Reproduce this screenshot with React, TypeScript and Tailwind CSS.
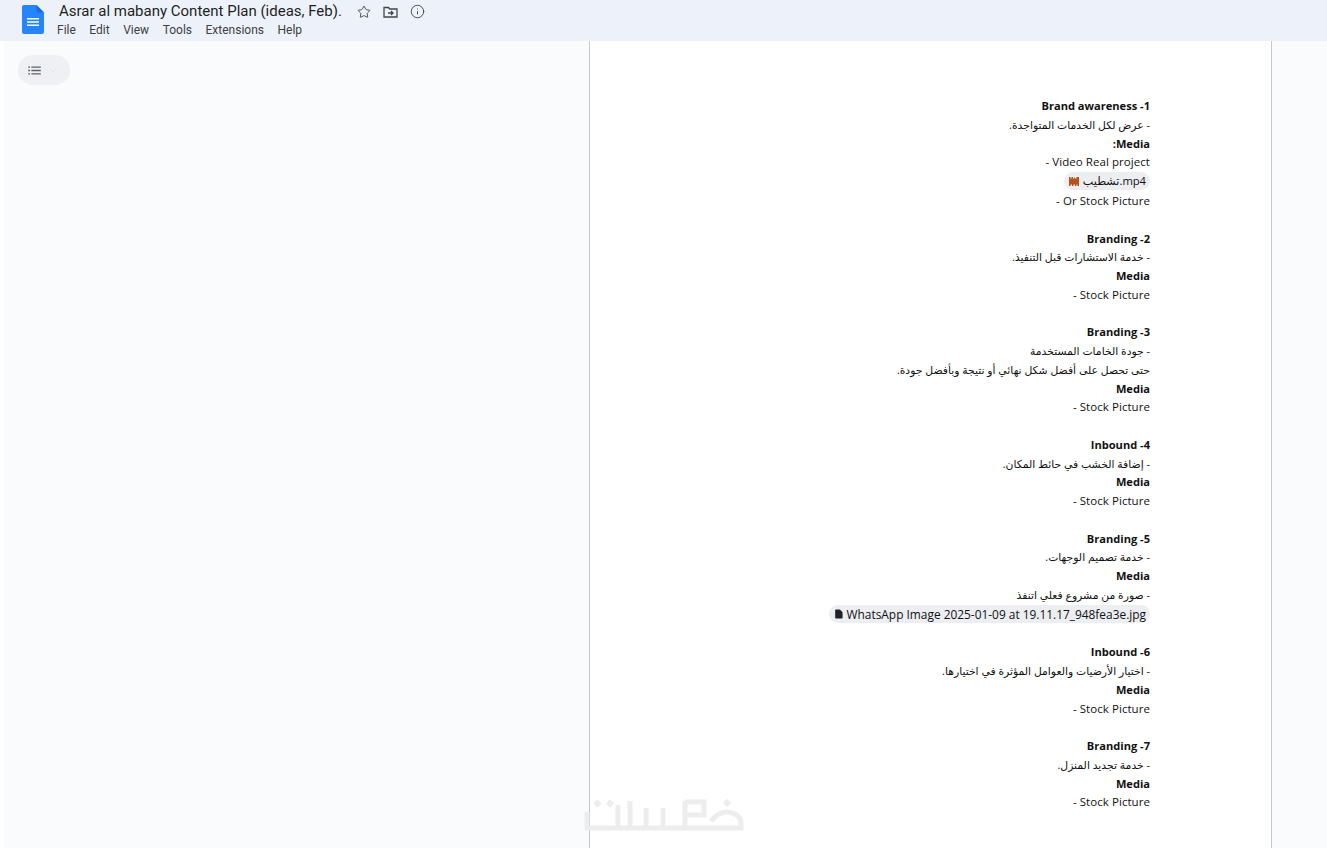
import React from "react";
import { Star, Info } from "lucide-react";

function Line({ children, kind = "latin" }: { children: React.ReactNode; kind?: "latin" | "bold" | "arabic" }) {
  const size =
    kind === "bold"
      ? "font-bold text-[11.100px] leading-[18.75px]"
      : kind === "arabic"
        ? "text-[10.800px] leading-[17.5px]"
        : "text-[11.500px] tracking-[0.06px] leading-[17.75px]";
  return <div className={"h-[18.75px] whitespace-nowrap " + size}>{children}</div>;
}
const Blank = () => <div className="h-[18.75px]" />;

function Chip({ icon, text, className }: { icon: React.ReactNode; text: string; className: string }) {
  return (
    <div className="h-5 flex justify-start items-start">
      <div dir="ltr" className={"h-[18px] flex items-center gap-[4px] rounded-[9px] bg-[#eceef1] pr-[4px] " + className}>
        {icon}
        <span className="leading-[18px] whitespace-nowrap">{text}</span>
      </div>
    </div>
  );
}

const Film = () => (
  <svg width="10" height="9" viewBox="0 0 10 9"><path d="M0 0h1.500v1.500h1V0h1.500v1.500h1.500V0H6v1.500h1.500V0H10v9H8.500V7.500h-1V9H6V7.500H4.500V9H3V7.500H1.500V9H0z" fill="#b3541e" /></svg>
);
const FileIc = () => (
  <svg width="8" height="10" viewBox="0 0 9 10"><path d="M1 0h4.500L8.500 3v6.200a.8.800 0 0 1-.8.800H1a.8.800 0 0 1-.8-.8V.8A.8.800 0 0 1 1 0z" fill="#202124" /></svg>
);

export default function App() {
  return (
    <div className="relative w-[1327px] h-[848px] overflow-hidden bg-white pl-[4px] font-['Open_Sans','DejaVu_Sans',sans-serif]">
      <header className="h-[41px] bg-[#edf2fa] -ml-[4px] pl-[4px] flex">
        <svg className="ml-[18px] mt-[5px]" width="22" height="29" viewBox="0 0 22 29">
          <path d="M2 0h12.500L22 7.500V27a2 2 0 0 1-2 2H2a2 2 0 0 1-2-2V2a2 2 0 0 1 2-2z" fill="#2684fc" />
          <path d="M14.500 0L22 7.500h-5.500a2 2 0 0 1-2-2z" fill="#1a6fe0" />
          <path d="M5 13h12v1.500H5zM5 16.200h12v1.500H5zM5 19.400h12v1.500H5z" fill="#fff" />
        </svg>
        <div className="ml-[15px] flex flex-col font-['Roboto',sans-serif]">
          <div className="flex items-center h-[21px] mt-[1px]">
            <span className="w-[282px] text-[15px] leading-[21px] text-[#1f1f1f] whitespace-nowrap">Asrar al mabany Content Plan (ideas, Feb).</span>
            <span className="ml-[16px] flex items-center gap-[12px] text-[#444746]">
              <Star size={14} strokeWidth={1.600} />
              <svg width="15" height="14" viewBox="0 0 15 14" fill="none" stroke="currentColor" strokeWidth="1.300">
                <path d="M1 2.500h4.500l1.300 1.500H14v8H1z" />
                <path d="M5 8h5M8 6l2 2-2 2" />
              </svg>
              <Info size={15} strokeWidth={1.500} />
            </span>
          </div>
          <nav className="-ml-[2px] flex gap-[13.500px] text-[12px] leading-[16px] text-[#3c4043]">
            <span>File</span><span>Edit</span><span>View</span><span>Tools</span><span>Extensions</span><span>Help</span>
          </nav>
        </div>
      </header>
      <main className="flex h-[807px] bg-[#f9fbfd]">
        <aside className="w-[585px] shrink-0 pl-[14px] pt-[14px]">
          <div className="w-[52px] h-[30px] rounded-[15px] bg-[#eef0f4] flex items-center pl-[10px] gap-[8px]">
            <svg width="13" height="9" viewBox="0 0 14 10" fill="#5f6368">
              <path d="M0 0.500h2v1.500H0zM3.500 0.500H14v1.500H3.500zM0 4.200h2v1.500H0zM3.500 4.200H14v1.500H3.500zM0 8h2v1.500H0zM3.500 8H14v1.500H3.500z" />
            </svg>
            <svg width="8" height="5" viewBox="0 0 8 5" fill="none" stroke="#e2e5ea" strokeWidth="1"><path d="M1 1l3 3 3-3" /></svg>
          </div>
        </aside>
        <section dir="rtl" className="w-[683px] shrink-0 bg-white border-x border-[#c7c7c7] pt-[56px] pr-[121px] text-[#111]">
          <Line kind="bold">1- Brand awareness</Line>
          <Line kind="arabic">- عرض لكل الخدمات المتواجدة.</Line>
          <Line kind="bold">Media:</Line>
          <Line>Video Real project -</Line>
          <Chip icon={<Film />} text="تشطيب.mp4" className="pl-[5px] text-[11.200px]" />
          <Line>Or Stock Picture -</Line>
          <Blank />
          <Line kind="bold">2- Branding</Line>
          <Line kind="arabic">- خدمة الاستشارات قبل التنفيذ.</Line>
          <Line kind="bold">Media</Line>
          <Line>Stock Picture -</Line>
          <Blank />
          <Line kind="bold">3- Branding</Line>
          <Line kind="arabic">- جودة الخامات المستخدمة</Line>
          <Line kind="arabic">حتى تحصل على أفضل شكل نهائي أو نتيجة وبأفضل جودة.</Line>
          <Line kind="bold">Media</Line>
          <Line>Stock Picture -</Line>
          <Blank />
          <Line kind="bold">4- Inbound</Line>
          <Line kind="arabic">- إضافة الخشب في حائط المكان.</Line>
          <Line kind="bold">Media</Line>
          <Line>Stock Picture -</Line>
          <Blank />
          <Line kind="bold">5- Branding</Line>
          <Line kind="arabic">- خدمة تصميم الوجهات.</Line>
          <Line kind="bold">Media</Line>
          <Line kind="arabic">- صورة من مشروع فعلي اتنفذ</Line>
          <Chip icon={<FileIc />} text="WhatsApp Image 2025-01-09 at 19.11.17_948fea3e.jpg" className="pl-[6px] text-[11.900px]" />
          <Blank />
          <Line kind="bold">6- Inbound</Line>
          <Line kind="arabic">- اختيار الأرضيات والعوامل المؤثرة في اختيارها.</Line>
          <Line kind="bold">Media</Line>
          <Line>Stock Picture -</Line>
          <Blank />
          <Line kind="bold">7- Branding</Line>
          <Line kind="arabic">- خدمة تجديد المنزل.</Line>
          <Line kind="bold">Media</Line>
          <Line>Stock Picture -</Line>
        </section>
      </main>
      <svg aria-label="Khamsat logo" className="absolute left-[584px] top-[797px]" width="160" height="36" viewBox="0 0 160 36" fill="none" stroke="#ededed" strokeWidth="5">
        <path d="M3 15V31H157V25C157 20 150 15 143 15C137 15 131 19 127 24" />
        <path d="M34 8V31M46 4V31M62 11V31M79 11V31M101 4V31M101 5H120V18H101" />
        <rect x="10.500" y="3.500" width="6" height="6" fill="#ededed" stroke="none" transform="rotate(45 13.500 6.500)" />
        <rect x="23" y="3.500" width="6" height="6" fill="#ededed" stroke="none" transform="rotate(45 26 6.500)" />
        <rect x="140" y="3" width="6" height="6" fill="#ededed" stroke="none" transform="rotate(45 143 6)" />
      </svg>
    </div>
  );
}
